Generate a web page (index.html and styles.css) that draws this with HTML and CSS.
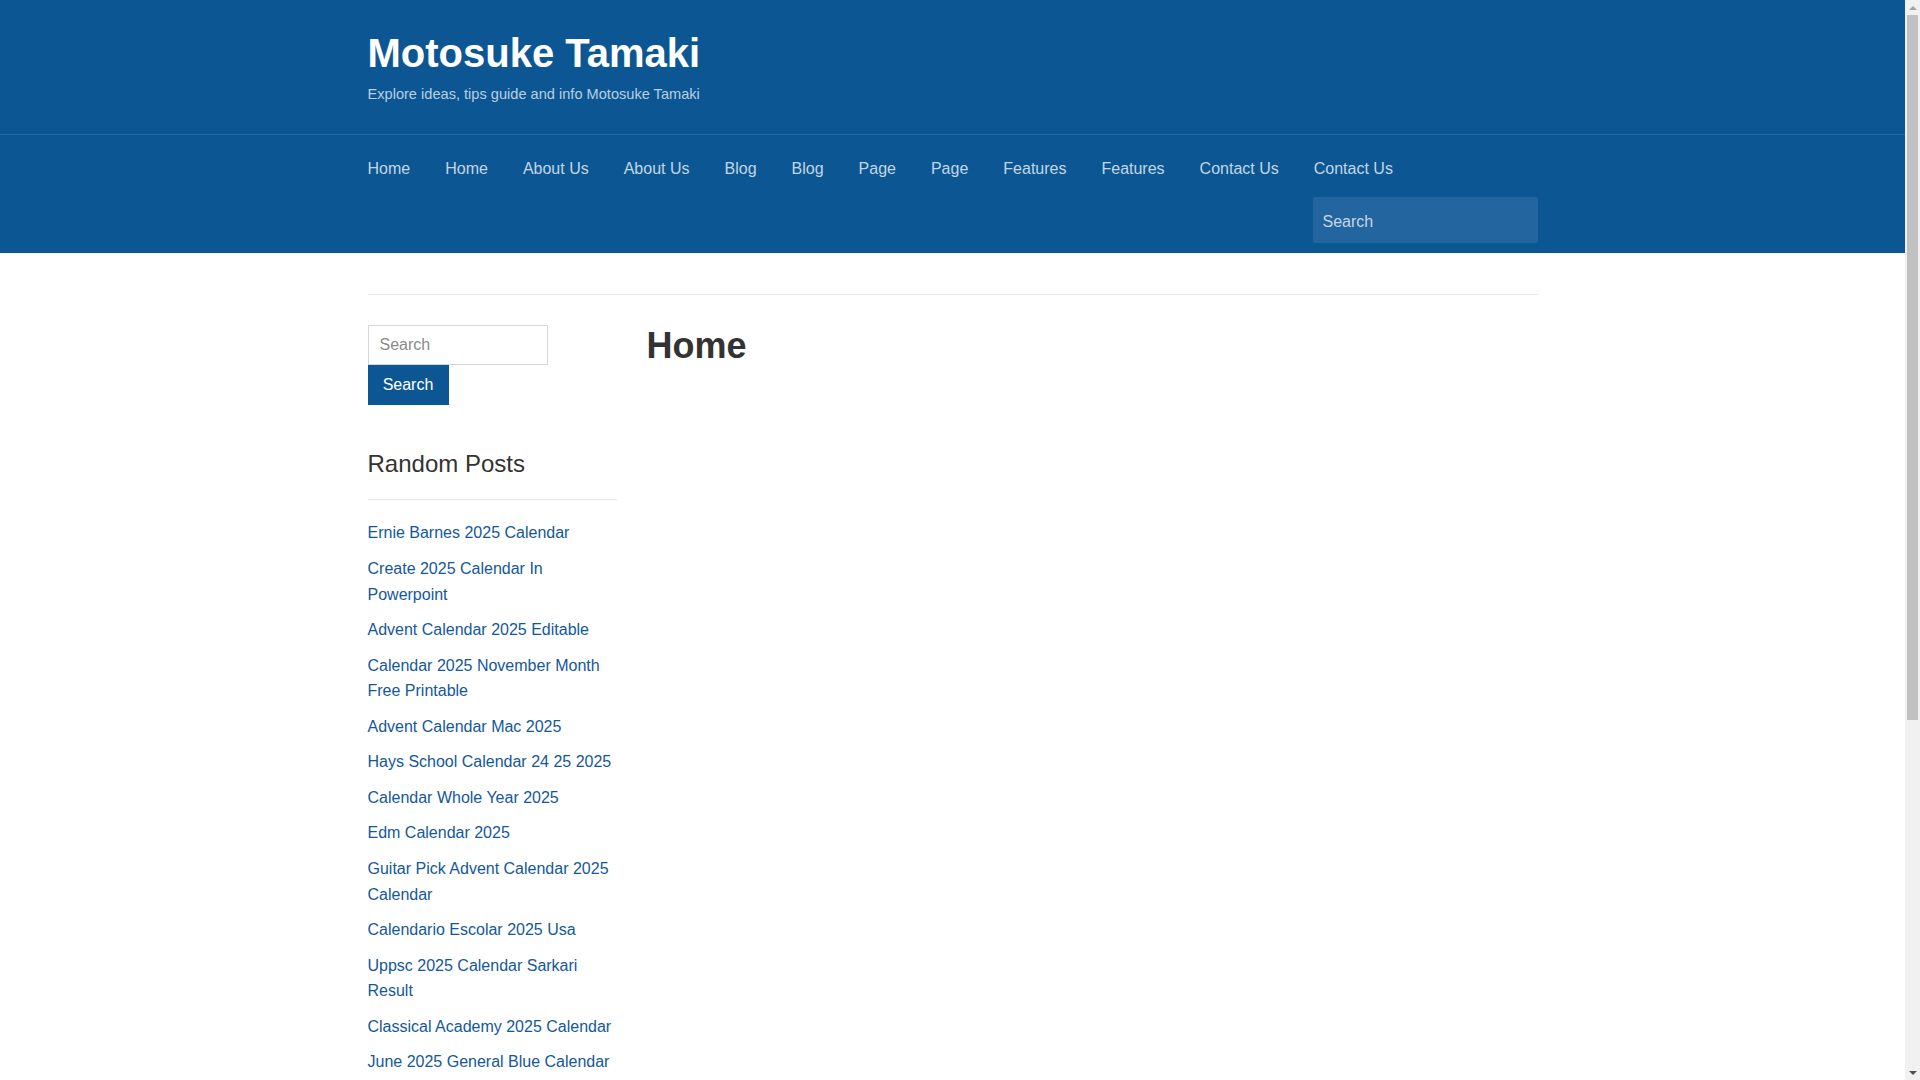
FILE: index.html
```html
<!DOCTYPE html>
<html lang="en">
<head>
<meta charset="utf-8">
<title>Motosuke Tamaki</title>
<link rel="stylesheet" href="styles.css">
</head>
<body>
<header class="site-header">
  <div class="container">
    <h1 class="site-title">Motosuke Tamaki</h1>
    <p class="site-desc">Explore ideas, tips guide and info Motosuke Tamaki</p>
  </div>
</header>
<nav class="site-nav">
  <div class="container nav-inner">
    <ul class="menu">
      <li><a href="#">Home</a></li>
      <li><a href="#">Home</a></li>
      <li><a href="#">About Us</a></li>
      <li><a href="#">About Us</a></li>
      <li><a href="#">Blog</a></li>
      <li><a href="#">Blog</a></li>
      <li><a href="#">Page</a></li>
      <li><a href="#">Page</a></li>
      <li><a href="#">Features</a></li>
      <li><a href="#">Features</a></li>
      <li><a href="#">Contact Us</a></li>
      <li><a href="#">Contact Us</a></li>
    </ul>
    <form class="nav-search">
      <input type="text" placeholder="Search">
    </form>
  </div>
</nav>
<div class="container page">
  <div class="layout">
    <aside class="sidebar">
      <form class="side-search">
        <input type="text" placeholder="Search">
        <button type="button">Search</button>
      </form>
      <h2 class="widget-title">Random Posts</h2>
      <ul class="posts">
        <li><a href="#">Ernie Barnes 2025 Calendar</a></li>
        <li><a href="#">Create 2025 Calendar In Powerpoint</a></li>
        <li><a href="#">Advent Calendar 2025 Editable</a></li>
        <li><a href="#">Calendar 2025 November Month Free Printable</a></li>
        <li><a href="#">Advent Calendar Mac 2025</a></li>
        <li><a href="#">Hays School Calendar 24 25 2025</a></li>
        <li><a href="#">Calendar Whole Year 2025</a></li>
        <li><a href="#">Edm Calendar 2025</a></li>
        <li><a href="#">Guitar Pick Advent Calendar 2025 Calendar</a></li>
        <li><a href="#">Calendario Escolar 2025 Usa</a></li>
        <li><a href="#">Uppsc 2025 Calendar Sarkari Result</a></li>
        <li><a href="#">Classical Academy 2025 Calendar</a></li>
        <li><a href="#">June 2025 General Blue Calendar</a></li>
      </ul>
    </aside>
    <main class="content">
      <h1 class="page-title">Home</h1>
    </main>
  </div>
</div>
<div class="scrollbar" aria-hidden="true">
  <div class="sb-btn sb-up"><span class="tri-up"></span></div>
  <div class="sb-track"><div class="sb-thumb"></div></div>
  <div class="sb-btn sb-down"><span class="tri-down"></span></div>
</div>
</body>
</html>
```
FILE: styles.css
```css
* { box-sizing: border-box; }
html, body { margin: 0; padding: 0; }
body {
  font-family: "Liberation Sans", Arial, sans-serif;
  font-size: 16px;
  color: #333;
  background: #fff;
  padding-right: 15px;
}
.container {
  width: 1170px;
  margin: 0 auto;
}
.site-header {
  background: #0c5793;
  height: 134px;
  padding-top: 32px;
}
.site-title {
  margin: 0;
  font-size: 40px;
  line-height: 43px;
  font-weight: bold;
  color: #fff;
}
.site-desc {
  margin: 9px 0 0;
  font-size: 14.6px;
  line-height: 20.7px;
  color: #b9cfe2;
}
.site-nav {
  background: #0c5793;
  border-top: 1px solid #2769a2;
}
.nav-inner {
  display: flex;
  flex-wrap: wrap;
  align-items: flex-start;
}
.menu {
  list-style: none;
  margin: 0;
  padding: 23px 0 18px;
  display: flex;
  column-gap: 35px;
}
.menu a {
  display: block;
  line-height: 21px;
  color: #c3d6e6;
  text-decoration: none;
  font-size: 16px;
}
.nav-search {
  margin: 0 0 10px auto;
}
.nav-search input {
  display: block;
  width: 225px;
  height: 46px;
  border: 0;
  border-radius: 3px;
  background: #23659f;
  padding: 3px 10px 0;
  font-family: inherit;
  font-size: 16px;
  color: #fff;
}
.nav-search input::placeholder { color: #c5d7e7; }
.page {
  margin-top: 41px;
  border-top: 1px solid #e8e8e8;
  min-height: 1390px;
}
.layout {
  display: grid;
  grid-template-columns: 249px 1fr;
  column-gap: 30px;
  padding-top: 30px;
}
.side-search input {
  display: block;
  width: 180px;
  height: 40px;
  border: 1px solid #d6d6d6;
  padding: 0 11px;
  font-family: inherit;
  font-size: 16px;
  color: #333;
  background: #fff;
}
.side-search input::placeholder { color: #8a8a8a; }
.side-search button {
  display: block;
  width: 81px;
  height: 40px;
  border: 0;
  border-radius: 0;
  background: #0c5793;
  color: #fff;
  font-family: inherit;
  font-size: 16px;
  padding: 0;
}
.widget-title {
  margin: 46px 0 0;
  font-size: 24px;
  font-weight: normal;
  line-height: 26.4px;
  padding-bottom: 21.5px;
  border-bottom: 1px solid #e6e6e6;
  color: #333;
}
.posts {
  list-style: none;
  margin: 0;
  padding: 20.5px 0 0;
}
.posts li {
  line-height: 25.7px;
  margin-bottom: 9.8px;
}
.posts a {
  color: #14589a;
  text-decoration: none;
}
.page-title {
  margin: 0;
  padding-top: 1px;
  font-size: 36px;
  line-height: 1.1;
  font-weight: bold;
  color: #333;
}

/* simulated browser scrollbar */
.scrollbar {
  position: fixed;
  top: 0;
  right: 0;
  width: 15px;
  height: 100vh;
  background: #f1f1f1;
  display: flex;
  flex-direction: column;
}
.sb-btn {
  height: 15px;
  display: flex;
  align-items: center;
  justify-content: center;
}
.sb-track {
  flex: 1;
  padding: 0 2px;
}
.sb-thumb {
  height: 705px;
  background: #c1c1c1;
}
.tri-up {
  width: 0;
  height: 0;
  border-left: 4px solid transparent;
  border-right: 4px solid transparent;
  border-bottom: 4px solid #a3a3a3;
}
.tri-down {
  width: 0;
  height: 0;
  border-left: 4px solid transparent;
  border-right: 4px solid transparent;
  border-top: 4px solid #505050;
}
```
